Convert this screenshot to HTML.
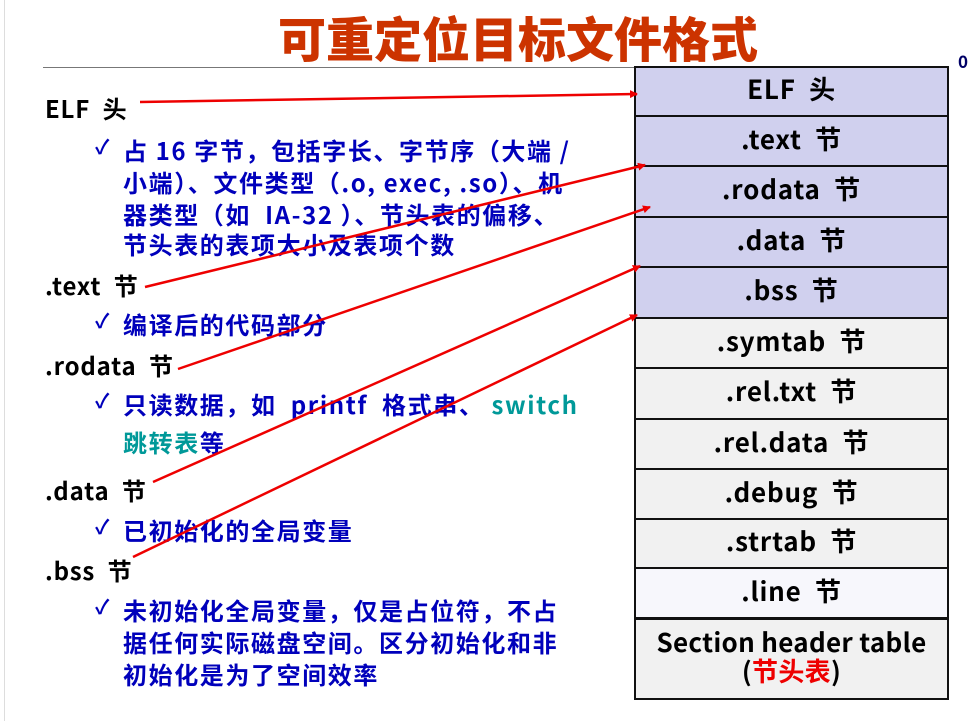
<!DOCTYPE html>
<html><head><meta charset="utf-8"><style>
body{margin:0;width:978px;height:721px;background:#fff;position:relative;overflow:hidden;font-family:"Noto Sans CJK SC","Liberation Sans",sans-serif;font-weight:bold}
.t{position:absolute;white-space:pre;line-height:1}
.title{left:0;width:1036px;text-align:center;top:12px;font-size:48px;color:#cc3300;font-weight:900;white-space:nowrap}
.k{font-size:24px;color:#000;left:45px;letter-spacing:0.8px}
.b{font-size:24px;color:#0000bb;left:123px;letter-spacing:1.6px}
.c{font-size:20px;color:#0000bb;left:95px}
.box{position:absolute;left:634px;width:311px;border:2px solid #111;display:flex;align-items:center;justify-content:center;font-size:26px;text-align:center;line-height:1.1;white-space:pre;letter-spacing:0.8px;padding-bottom:4px;box-sizing:content-box}
.bl{background:#d0d0ee}.gr{background:#f1f1f1}
</style></head><body>
<div style="position:absolute;left:4px;top:0;width:1px;height:721px;background:#ddd"></div>
<div class="t title">可重定位目标文件格式</div>
<div style="position:absolute;left:43px;top:67px;width:591px;height:1px;background:#777"></div>
<div class="t" style="left:958px;top:52px;font-size:17px;color:#000066">0</div>

<div class="box bl" style="top:66px;height:43px">ELF  头</div>
<div class="box bl" style="top:115px;height:44px">.text  节</div>
<div class="box bl" style="top:165px;height:45px">.rodata  节</div>
<div class="box bl" style="top:216px;height:44px">.data  节</div>
<div class="box bl" style="top:266px;height:45px">.bss  节</div>
<div class="box gr" style="top:317px;height:44px">.symtab  节</div>
<div class="box gr" style="top:367px;height:45px">.rel.txt  节</div>
<div class="box gr" style="top:418px;height:44px">.rel.data  节</div>
<div class="box gr" style="top:468px;height:44px">.debug  节</div>
<div class="box gr" style="top:518px;height:43px">.strtab  节</div>
<div class="box" style="top:567px;height:44px;background:#f7f7fc">.line  节</div>
<div class="box gr" style="top:618px;height:74px;flex-direction:column;letter-spacing:0.3px">Section header table<span>(<span style="color:#ee0000">节头表</span>)</span></div>

<div class="t k" style="top:96px">ELF  头</div>
<div class="t c" style="top:136px">✓</div>
<div class="t b" style="top:138px">占 16 字节，包括字长、字节序（大端 /</div>
<div class="t b" style="top:170px">小端）、文件类型（.o, exec, .so）、机</div>
<div class="t b" style="top:202px">器类型（如  IA-32 ）、节头表的偏移、</div>
<div class="t b" style="top:232px">节头表的表项大小及表项个数</div>
<div class="t k" style="top:273px">.text  节</div>
<div class="t c" style="top:310px">✓</div>
<div class="t b" style="top:312px">编译后的代码部分</div>
<div class="t k" style="top:353px">.rodata  节</div>
<div class="t c" style="top:390px">✓</div>
<div class="t b" style="top:392px">只读数据，如  printf  格式串、 <span style="color:#009999">switch</span></div>
<div class="t b" style="top:430px"><span style="color:#009999">跳转表</span>等</div>
<div class="t k" style="top:478px">.data  节</div>
<div class="t c" style="top:516px">✓</div>
<div class="t b" style="top:518px">已初始化的全局变量</div>
<div class="t k" style="top:558px">.bss  节</div>
<div class="t c" style="top:596px">✓</div>
<div class="t b" style="top:598px">未初始化全局变量，仅是占位符，不占</div>
<div class="t b" style="top:630px">据任何实际磁盘空间。区分初始化和非</div>
<div class="t b" style="top:662px">初始化是为了空间效率</div>

<svg style="position:absolute;left:0;top:0" width="978" height="721">
<defs><marker id="a" markerWidth="8" markerHeight="8" refX="7" refY="4" orient="auto" markerUnits="userSpaceOnUse"><path d="M0,0 L8,4 L0,8z" fill="#ee0000"/></marker></defs>
<g stroke="#ee0000" stroke-width="2.5" marker-end="url(#a)">
<line x1="140" y1="102" x2="637" y2="94"/>
<line x1="145" y1="287" x2="645" y2="165"/>
<line x1="178" y1="369" x2="650" y2="207"/>
<line x1="153" y1="482" x2="640" y2="266"/>
<line x1="133" y1="557" x2="637" y2="315"/>
</g></svg>
</body></html>
